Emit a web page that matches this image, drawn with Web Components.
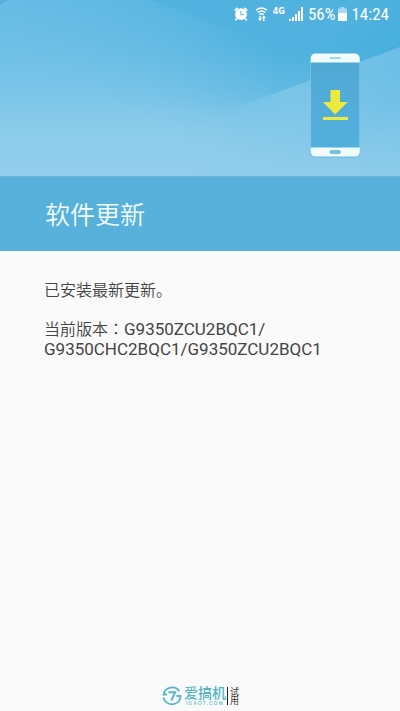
<!DOCTYPE html>
<html lang="zh-CN">
<head>
<meta charset="utf-8">
<meta name="viewport" content="width=device-width, initial-scale=1">
<title>软件更新</title>
<style>
  html, body { margin: 0; min-height: 100%; }
  body { background: #fafafa; font-family: Roboto, "Noto Sans CJK SC", sans-serif; color: #444; }
</style>
</head>
<body>
<update-page>
  <update-hero slot="hero">
    <status-bar slot="status" network="4G" battery="56%" time="14:24"></status-bar>
    <phone-art slot="art"></phone-art>
  </update-hero>
  <title-band slot="title">软件更新</title-band>
  <update-info slot="info" label="当前版本：" version="G9350ZCU2BQC1/G9350CHC2BQC1/G9350ZCU2BQC1">已安装最新更新。</update-info>
  <site-mark slot="mark"></site-mark>
</update-page>
<script>
const define = (name, html, setup) => customElements.define(name, class extends HTMLElement {
  connectedCallback() {
    if (this.shadowRoot) return;
    this.attachShadow({ mode: 'open' }).innerHTML = html;
    if (setup) setup(this, this.shadowRoot);
  }
});

define('update-page', `
  <style>
    :host { display: flex; flex-direction: column; min-height: 100vh; }
    main { flex: 1; }
  </style>
  <header><slot name="hero"></slot><slot name="title"></slot></header>
  <main><slot name="info"></slot></main>
  <footer><slot name="mark"></slot></footer>`);

define('update-hero', `
  <style>
    :host { display: grid; background: #6cbee5; }
    .sky, .front { grid-area: 1 / 1; min-width: 0; }
    .sky { width: 100%; height: 100%; min-height: 0; contain: size; display: block; }
    .front { display: flex; flex-direction: column; gap: 25px; padding-bottom: 18px; }
    .art { display: flex; justify-content: flex-end; padding-right: 40px; }
  </style>
  <svg class="sky" viewBox="0 0 400 176" preserveAspectRatio="none" aria-hidden="true">
    <defs>
      <linearGradient id="base" x1="0" y1="0" x2="0" y2="1">
        <stop offset="0" stop-color="#66bce5"/><stop offset=".5" stop-color="#76c3e8"/><stop offset="1" stop-color="#94cfeb"/>
      </linearGradient>
      <linearGradient id="side" gradientUnits="userSpaceOnUse" x1="20" y1="60" x2="260" y2="0">
        <stop offset="0" stop-color="#51b2df" stop-opacity="0"/><stop offset=".6" stop-color="#51b2df" stop-opacity=".55"/><stop offset="1" stop-color="#51b2df"/>
      </linearGradient>
      <linearGradient id="fade" gradientUnits="userSpaceOnUse" x1="250" y1="40" x2="210" y2="140">
        <stop offset="0" stop-color="#fff"/><stop offset=".3" stop-color="#fff" stop-opacity=".75"/><stop offset="1" stop-color="#fff" stop-opacity="0"/>
      </linearGradient>
      <mask id="down" maskUnits="userSpaceOnUse" x="0" y="0" width="400" height="176"><rect width="400" height="176" fill="url(#fade)"/></mask>
      <linearGradient id="upper" gradientUnits="userSpaceOnUse" x1="340" y1="0" x2="400" y2="40">
        <stop offset="0" stop-color="#51b2df"/><stop offset="1" stop-color="#47afdc"/>
      </linearGradient>
      <linearGradient id="low" gradientUnits="userSpaceOnUse" x1="180" y1="0" x2="400" y2="0">
        <stop offset="0" stop-color="#7bc6e9" stop-opacity="0"/><stop offset=".5" stop-color="#78c4e8"/><stop offset="1" stop-color="#6cbee6"/>
      </linearGradient>
      <linearGradient id="lowfade" x1="0" y1="0" x2="0" y2="1">
        <stop offset="0" stop-color="#92ceeb" stop-opacity="0"/><stop offset=".4" stop-color="#92ceeb" stop-opacity=".15"/><stop offset="1" stop-color="#92ceeb"/>
      </linearGradient>
    </defs>
    <rect width="400" height="176" fill="url(#base)"/>
    <rect width="400" height="176" fill="url(#side)" mask="url(#down)"/>
    <path d="M150 0H400V95Z" fill="url(#upper)" opacity=".85"/>
    <path d="M400 47L311 80L170 132V176H400Z" fill="url(#low)"/>
    <rect y="50" width="400" height="126" fill="url(#lowfade)" opacity=".9"/>
    <path d="M0 0H8L0 5Z" fill="#54b3de"/>
  </svg>
  <div class="front">
    <slot name="status"></slot>
    <div class="art"><slot name="art"></slot></div>
  </div>`);

define('status-bar', `
  <style>
    :host { display: flex; justify-content: flex-end; align-items: center; height: 28px; padding-right: 11px; color: #fff; font: 17px/28px "Roboto Condensed", Roboto, sans-serif; }
    svg { display: block; flex: none; }
    .wifi { margin-left: 7px; }
    .net { font: 700 8px/8px "DejaVu Sans", sans-serif; margin: 0 4px 5px 5px; }
    .pct { margin: 0 3px 0 5px; }
    .time { margin-left: 4px; }
  </style>
  <svg width="14" height="14" viewBox="0 0 14 14" role="img" aria-label="闹钟">
    <path d="M.7 3.700L3.700.8M13.300 3.700L10.300.8M3 11.500L1.300 13.300M11 11.500l1.700 1.800" stroke="#fff" stroke-width="1.700"/>
    <circle cx="7" cy="7.200" r="5.900" fill="#fff"/>
    <path d="M6.800 4.200v3.500h2.900" fill="none" stroke="#50b2df" stroke-width="1"/>
  </svg>
  <svg class="wifi" width="13" height="14" viewBox="0 0 13 14" role="img" aria-label="无线网络">
    <path d="M1 3.300Q6.500-1.200 12 3.300M2.700 5.500Q6.500 2.300 10.300 5.500M4.400 7.600Q6.500 5.800 8.600 7.600" fill="none" stroke="#fff" stroke-width="1.400"/>
    <path d="M4.300 9v2.500H2.700L5 14l2.200-2.500H5.700V9zM7.900 14v-3H6.700L8.800 8.500 11 11H9.500v3z" fill="#fff"/>
  </svg>
  <span class="net"></span>
  <svg width="14" height="14" viewBox="0 0 14 14" role="img" aria-label="信号">
    <path d="M0 12h2v2H0zM3 10h2v4H3zM6 7h2v7H6zM9 4h2v10H9zM12 0h2v14h-2z" fill="#fff"/>
  </svg>
  <span class="pct"></span>
  <svg width="9" height="14" viewBox="0 0 9 14" role="img" aria-label="电池">
    <path d="M2.500 0h4v1.500H9V6H0V1.500h2.500z" fill="#fff" opacity=".5"/><path d="M0 6h9v8H0z" fill="#fff"/>
  </svg>
  <span class="time"></span>`, (host, root) => {
    root.querySelector('.net').textContent = host.getAttribute('network');
    root.querySelector('.pct').textContent = host.getAttribute('battery');
    root.querySelector('.time').textContent = host.getAttribute('time');
  });

define('phone-art', `
  <style>:host { display: block; } svg { display: block; }</style>
  <svg width="50" height="105" viewBox="0 0 50 105" aria-hidden="true">
    <defs><linearGradient id="g" x1="0" y1="0" x2="0" y2="1"><stop offset="0" stop-color="#50a9d5"/><stop offset="1" stop-color="#53b0dd"/></linearGradient></defs>
    <rect x=".5" y="1" width="49" height="103.500" rx="5" fill="#62afd2" opacity=".7"/>
    <rect x=".7" y=".4" width="49" height="103.200" rx="5" fill="#f1fcff"/>
    <rect x=".7" y="9.500" width="49" height="85" fill="url(#g)"/>
    <rect x="19.500" y="4" width="11.500" height="2" rx="1" fill="#a7d5e6"/>
    <rect x="19.500" y="97" width="11.500" height="4" rx="2" fill="#76c1df"/>
    <path d="M20.500 37H30v12h7.700L25.200 61.500 12.800 49h7.700zM13 64h25v3H13z" fill="#eeea3d"/>
  </svg>`);

define('title-band', `
  <style>
    :host { display: block; background: #57b1db; border-top: 1px solid #68b5d8; padding: 17px 45px 19px; }
    h1 { margin: 0; font: 350 25px/38px "Noto Sans CJK SC", sans-serif; color: #f4fdff; }
  </style>
  <h1><slot></slot></h1>`);

define('update-info', `
  <style>
    :host { display: flex; flex-direction: column; gap: 19px; padding: 30px 44px; font: 350 16px/20px Roboto, "Noto Sans CJK SC", sans-serif; color: #444; }
    p { margin: 0; }
    .version { font-size: 17px; line-height: 18px; font-weight: 400; }
  </style>
  <p><slot></slot></p>
  <p><span class="label" lang="zh-TW"></span><span class="version"></span></p>`, (host, root) => {
    root.querySelector('.label').textContent = host.getAttribute('label');
    const out = root.querySelector('.version');
    host.getAttribute('version').split(/(?<=\/)/).forEach((part, i) => {
      if (i) out.append(document.createElement('wbr'));
      out.append(part);
    });
  });

define('site-mark', `
  <style>
    :host { display: flex; justify-content: center; align-items: center; padding-bottom: 5px; color: #55b6c6; font-family: "Liberation Sans", "Noto Sans CJK SC", sans-serif; }
    svg { display: block; }
    .name { display: grid; justify-items: center; margin: 0 1px 0 2px; }
    b { font-size: 14px; line-height: 16px; font-weight: 500; }
    small { font-size: 5px; line-height: 5px; font-weight: 700; opacity: .8; letter-spacing: 1px; }
    .trial { writing-mode: vertical-rl; border-left: 1px solid #222; padding-left: 1px; color: #333; font-size: 9px; line-height: 9px; }
  </style>
  <svg width="20" height="20" viewBox="0 0 20 20" aria-hidden="true">
    <path d="M17.300 5.200A8.700 8.700 0 0 0 1.600 8.500H5M1.500 11.500A8.700 8.700 0 0 0 18.500 11.500V10H14.500" fill="none" stroke="#55b6c6" stroke-width="1.800"/>
    <path d="M6.500 6.300h6.700L9.300 14.500" fill="none" stroke="#55b6c6" stroke-width="1.900"/>
  </svg>
  <span class="name"><b>爱搞机</b><small>IGAO7.COM</small></span>
  <span class="trial">试用</span>`);
</script>
</body>
</html>
